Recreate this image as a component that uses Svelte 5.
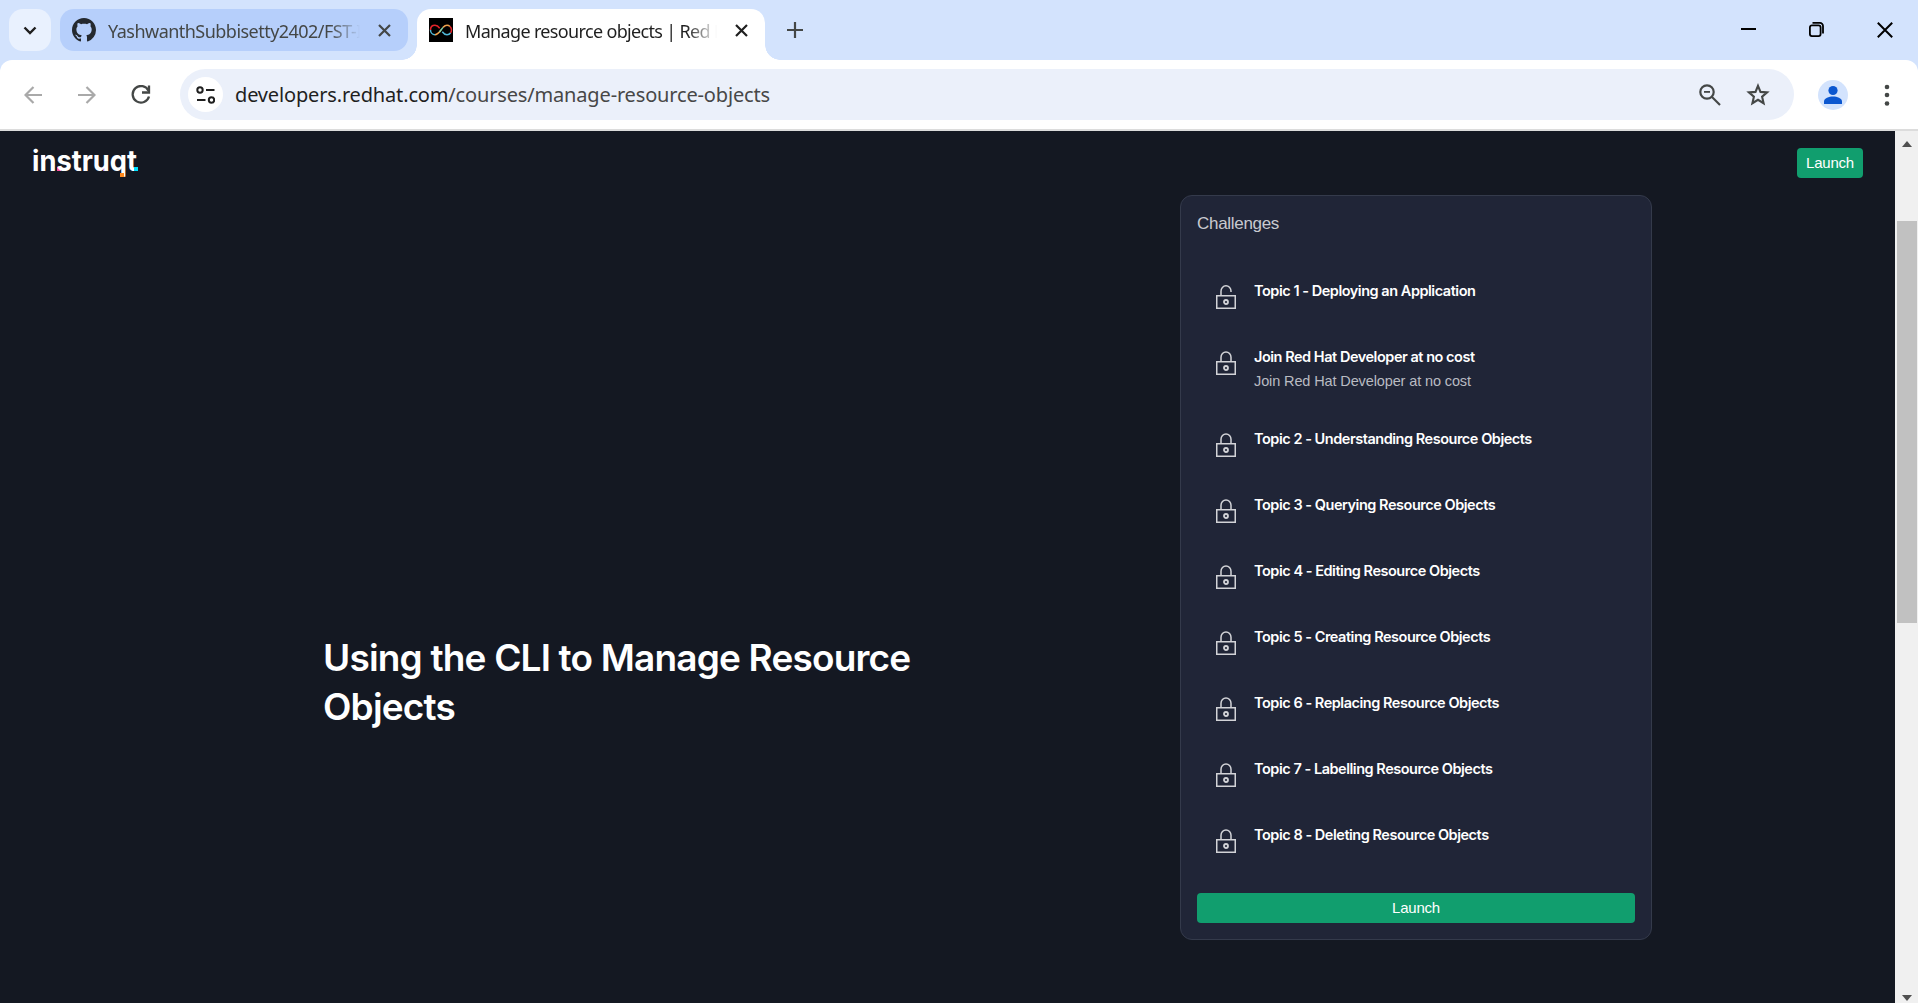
<script>
  const challenges = [
    { title: 'Topic 1 - Deploying an Application', open: true },
    { title: 'Join Red Hat Developer at no cost', sub: 'Join Red Hat Developer at no cost' },
    { title: 'Topic 2 - Understanding Resource Objects' },
    { title: 'Topic 3 - Querying Resource Objects' },
    { title: 'Topic 4 - Editing Resource Objects' },
    { title: 'Topic 5 - Creating Resource Objects' },
    { title: 'Topic 6 - Replacing Resource Objects' },
    { title: 'Topic 7 - Labelling Resource Objects' },
    { title: 'Topic 8 - Deleting Resource Objects' }
  ];
</script>

<div class="window">
  <header class="tabstrip">
    <button class="search-tabs" aria-label="Search tabs">
      <svg width="14" height="9" viewBox="0 0 14 9"><path d="M1.5 1.5 7 7l5.5-5.5" fill="none" stroke="#1f1f1f" stroke-width="2.4" /></svg>
    </button>
    <div class="tab idle">
      <svg class="fav" width="24" height="24" viewBox="0 0 16 16"><path fill="#24292f" d="M8 0C3.58 0 0 3.58 0 8c0 3.54 2.29 6.53 5.47 7.59.4.07.55-.17.55-.38 0-.19-.01-.82-.01-1.49-2.01.37-2.53-.49-2.69-.94-.09-.23-.48-.94-.82-1.13-.28-.15-.68-.52-.01-.53.63-.01 1.08.58 1.23.82.72 1.21 1.87.87 2.33.66.07-.52.28-.87.51-1.07-1.78-.2-3.64-.89-3.64-3.95 0-.87.31-1.59.82-2.15-.08-.2-.36-1.02.08-2.12 0 0 .67-.21 2.2.82.64-.18 1.32-.27 2-.27s1.36.09 2 .27c1.53-1.04 2.2-.82 2.2-.82.44 1.1.16 1.92.08 2.12.51.56.82 1.27.82 2.15 0 3.07-1.87 3.75-3.65 3.95.29.25.54.73.54 1.48 0 1.07-.01 1.93-.01 2.2 0 .21.15.46.55.38A8.01 8.01 0 0 0 16 8c0-4.42-3.58-8-8-8z" /></svg>
      <span class="tab-title first">YashwanthSubbisetty2402/FST-I</span>
      <svg class="close" width="13" height="13" viewBox="0 0 13 13"><path d="m1 1 11 11M12 1 1 12" stroke="#444746" stroke-width="2.2" /></svg>
    </div>
    <div class="tab active">
      <svg class="fav" width="24" height="24" viewBox="0 0 24 24">
        <rect width="24" height="24" fill="#000" />
        <g fill="none" stroke-width="1.5">
          <path d="M1.5 12C1.500 9 3.500 7.300 6 7.300c2 0 3.500 1.200 4.700 2.900" stroke="#e5242a" />
          <path d="M1.500 12c0 2.600 2 4.700 4.500 4.700" stroke="#4fb9d8" />
          <path d="M6 16.700c2.500 0 4-2 6-4.700" stroke="#f0a04b" />
          <path d="M10.500 14.100 12 12l2-2.600" stroke="#7fd0a8" />
          <path d="M14 9.400c1.300-1.300 2.500-2.100 4-2.100 1.200 0 2 .3 3 1.200" stroke="#f0a04b" />
          <path d="M21 8.500c1 1 1.500 2.200 1.500 3.500s-.4 2.200-1 3" stroke="#e5242a" />
          <path d="M21.500 15c-.9 1.200-2.100 1.700-3.500 1.700-2 0-3.500-1.200-4.700-2.900" stroke="#4fb9d8" />
        </g>
      </svg>
      <span class="tab-title second">Manage resource objects | Red H</span>
      <svg class="close" width="13" height="13" viewBox="0 0 13 13"><path d="m1 1 11 11M12 1 1 12" stroke="#1f1f1f" stroke-width="2.2" /></svg>
    </div>
    <svg class="plus" width="16" height="16" viewBox="0 0 16 16"><path d="M8 0v16M0 8h16" stroke="#444746" stroke-width="2.2" /></svg>
    <div class="controls">
      <svg width="15" height="17" viewBox="0 0 15 17"><path d="M0 8h15" stroke="#000" stroke-width="2" /></svg>
      <svg width="15" height="15" viewBox="0 0 15 15" fill="none" stroke="#000" stroke-width="1.8"><rect x=".9" y="3.400" width="10.700" height="10.700" rx="2" /><path d="M3.500.9H11a3 3 0 0 1 3 3v7.500" /></svg>
      <svg width="16" height="16" viewBox="0 0 16 16"><path d="m.8.800 14.400 14.400M15.200.8.800 15.200" stroke="#000" stroke-width="2" /></svg>
    </div>
  </header>

  <div class="toolbar-wrap">
    <div class="toolbar">
      <svg class="back" width="18" height="18" viewBox="0 0 18 18"><path d="M18 9H2M9.500 1 1.500 9l8 8" fill="none" stroke="#a9a9a9" stroke-width="2.200" /></svg>
      <svg class="fwd" width="18" height="18" viewBox="0 0 18 18"><path d="M0 9h16M8.500 1l8 8-8 8" fill="none" stroke="#a9a9a9" stroke-width="2.200" /></svg>
      <svg class="reload" width="20" height="20" viewBox="0 0 20 20"><path d="M17.500 5.800A8.300 8.300 0 1 0 18 11.500" fill="none" stroke="#444746" stroke-width="2.300" /><path d="M18 .5v7h-7" fill="none" stroke="#444746" stroke-width="2.300" /></svg>
      <div class="omnibox">
        <span class="site">
          <svg width="19" height="18" viewBox="0 0 19 18" fill="none" stroke="#1f1f1f" stroke-width="2"><circle cx="4" cy="4" r="2.700" /><path d="M10 4h8.500M1 14h8.500" /><circle cx="15.500" cy="14" r="2.700" /></svg>
        </span>
        <span class="url">developers.redhat.com<i>/courses/manage-resource-objects</i></span>
        <svg class="zoomer" width="22" height="22" viewBox="0 0 22 22" fill="none" stroke="#444746" stroke-width="2.200"><circle cx="8" cy="8" r="6.700" /><path d="M13 13l8 8" /><path d="M5 7.900h6" stroke-width="1.800" /></svg>
        <svg class="star" width="24" height="23" viewBox="0 0 24 23"><path d="m12 2.800 2.500 6.100 6.600.5-5 4.300 1.500 6.500-5.600-3.400-5.600 3.400 1.500-6.500-5-4.300 6.600-.5z" fill="none" stroke="#444746" stroke-width="2.100" /></svg>
      </div>
      <svg class="profile" width="30" height="30" viewBox="0 0 30 30"><circle cx="15" cy="15" r="15" fill="#d3e3fd" /><circle cx="15" cy="10.500" r="4.600" fill="#0b57d0" /><path d="M6 24v-2.500c0-3.500 5-5 9-5s9 1.500 9 5V24z" fill="#0b57d0" /></svg>
      <svg class="dots" width="6" height="22" viewBox="0 0 6 22" fill="#444746"><circle cx="3" cy="3" r="2.300" /><circle cx="3" cy="11" r="2.300" /><circle cx="3" cy="19.500" r="2.300" /></svg>
    </div>
  </div>

  <div class="viewport">
    <main class="page">
      <nav class="topbar">
        <svg class="logo" width="108" height="32" viewBox="0 0 108 32">
          <rect x="9" y="7" width="4" height="4" fill="#a774e8" />
          <rect x="25" y="19" width="4" height="4" fill="#ff4fa0" />
          <rect x="71" y="19" width="4" height="4" fill="#a774e8" />
          <text x="0" y="23" textLength="105" lengthAdjust="spacingAndGlyphs">instruqt</text>
          <rect x="88" y="25" width="4" height="4" fill="#ff8a1f" />
          <rect x="102" y="19" width="4" height="4" fill="#00e0ff" />
        </svg>
        <button class="launch">Launch</button>
      </nav>
      <div class="content">
        <h1>Using the CLI to Manage Resource Objects</h1>
        <section class="card">
          <h2>Challenges</h2>
          <ul>
            {#each challenges as c}
              <li>
                <svg class="lock" width="20" height="24" viewBox="0 0 20 24" fill="none" stroke="#d2d3d7" stroke-width="1.500">
                  <rect x=".75" y="10.750" width="18.500" height="12.500" />
                  <path d={c.open ? 'M5 10.500V6.200a5 5.300 0 0 1 10-.2v1' : 'M5 10.500V6.200a5 5.300 0 0 1 10 0v4.300'} />
                  <circle cx="10" cy="17" r="2" stroke-width="1.800" />
                </svg>
                <div class="texts">
                  <strong>{c.title}</strong>
                  {#if c.sub}<span>{c.sub}</span>{/if}
                </div>
              </li>
            {/each}
          </ul>
          <button class="launch wide">Launch</button>
        </section>
      </div>
    </main>
    <aside class="scrollbar">
      <svg width="10" height="6" viewBox="0 0 10 6"><path d="M0 6 5 0l5 6z" fill="#505050" /></svg>
      <div class="track"><div class="thumb"></div></div>
      <svg width="10" height="6" viewBox="0 0 10 6"><path d="M0 0h10L5 6z" fill="#505050" /></svg>
    </aside>
  </div>
</div>

<style>
  :global(body) { margin: 0; overflow: hidden; }
  * { box-sizing: border-box; }
  svg { display: block; flex: none; }
  button { border: 0; padding: 0; }
  .window { height: 1003px; display: flex; flex-direction: column; overflow: hidden; font-family: 'Open Sans', sans-serif; }

  .tabstrip { height: 60px; flex: none; background: #d3e3fd; display: flex; align-items: flex-start; padding: 9px 10px 0 9px; }
  .search-tabs { width: 42px; height: 42px; border-radius: 14px; background: #e9f1fe; display: grid; place-items: center; }
  .tab { width: 348px; display: flex; align-items: center; padding: 0 17px 0 12px; }
  .idle { height: 42px; margin-left: 9px; border-radius: 14px; background: #b6cffb; color: #444746; }
  .active { height: 51px; margin-left: 9px; padding-bottom: 9px; border-radius: 14px 14px 0 0; background: #fff; color: #1f1f1f; position: relative; }
  .active::before, .active::after { content: ''; position: absolute; bottom: 0; width: 15px; height: 15px; }
  .active::before { left: -15px; background: radial-gradient(circle at 0 0, transparent 14.500px, #fff 15px); }
  .active::after { right: -15px; background: radial-gradient(circle at 100% 0, transparent 14.500px, #fff 15px); }
  .tab-title { width: 252px; margin: 2px 0 0 12px; white-space: nowrap; overflow: hidden; font-family: 'Noto Sans', sans-serif; font-size: 18px; line-height: 26px; mask-image: linear-gradient(90deg, #000 88%, transparent 100%); }
  .first { letter-spacing: -0.53px; }
  .second { letter-spacing: -0.66px; }
  .close { margin-left: auto; }
  .plus { margin: 13px 0 0 22px; }
  .controls { margin: 12px 15px 0 auto; display: flex; align-items: center; gap: 53px; }

  .toolbar-wrap { height: 71px; flex: none; background: #d3e3fd; }
  .toolbar { height: 71px; background: #fff; border-radius: 12px 12px 0 0; border-bottom: 2px solid #dcdcdc; display: flex; align-items: center; padding-left: 24px; }
  .fwd { margin-left: 36px; }
  .reload { margin-left: 35px; }
  .omnibox { margin-left: 29px; width: 1614px; height: 51px; border-radius: 26px; background: #ebf0fa; display: flex; align-items: center; padding-left: 8px; }
  .site { width: 35px; height: 35px; border-radius: 50%; background: #fff; display: grid; place-items: center; }
  .url { margin-left: 12px; font-family: 'Noto Sans', sans-serif; font-size: 20px; letter-spacing: -0.16px; color: #1f1f1f; white-space: nowrap; }
  .url i { font-style: normal; color: #474747; }
  .zoomer { margin-left: auto; }
  .star { margin: 0 24px 0 25px; }
  .profile { margin-left: 24px; }
  .dots { margin-left: 36px; }

  .viewport { flex: 1; display: flex; min-height: 0; }
  .page { width: 1895px; background: #141822; color: #fff; font-family: Inter, sans-serif; }
  .topbar { height: 64px; display: flex; justify-content: space-between; padding: 17px 32px 0; align-items: flex-start; }
  .launch { width: 66px; height: 30px; border-radius: 4px; background: #119e6e; color: #fff; font: 400 15px/30px 'Liberation Sans', sans-serif; letter-spacing: -0.2px; }
  .logo text { font: 700 29px Inter, sans-serif; fill: #fff; }

  .content { display: flex; justify-content: space-between; padding: 0 243px 0 323px; align-items: flex-start; }
  h1 { margin: 438px 0 0; width: 620px; font-size: 37px; line-height: 49px; font-weight: 600; letter-spacing: -0.82px; }
  .card { width: 472px; height: 745px; border: 1px solid #343a4b; border-radius: 12px; background: #202537; padding: 16px 16px 15px; display: flex; flex-direction: column; }
  h2 { margin: 0; color: #c9cad0; font: 400 17px/24px 'Liberation Sans', sans-serif; letter-spacing: -0.3px; }
  ul { list-style: none; margin: 26px 0 21px; padding: 0; }
  li { display: flex; align-items: flex-start; padding: 17px 0 17px 19px; min-height: 66px; }
  .lock { margin-top: 6px; }
  .texts { margin-left: 18px; display: flex; flex-direction: column; }
  .texts strong { font-size: 14.500px; line-height: 24px; font-weight: 600; letter-spacing: -0.47px; }
  .texts span { font: 400 14.500px/24px 'Liberation Sans', sans-serif; letter-spacing: -0.12px; color: #b9bbc2; }
  .wide { width: 438px; }

  .scrollbar { flex: 1; background: #f0f0f0; display: flex; flex-direction: column; align-items: center; padding: 10px 0 2px; }
  .track { flex: 1; width: 20px; padding-top: 74px; margin-left: 1px; }
  .thumb { height: 402px; background: #c1c1c1; }
</style>
